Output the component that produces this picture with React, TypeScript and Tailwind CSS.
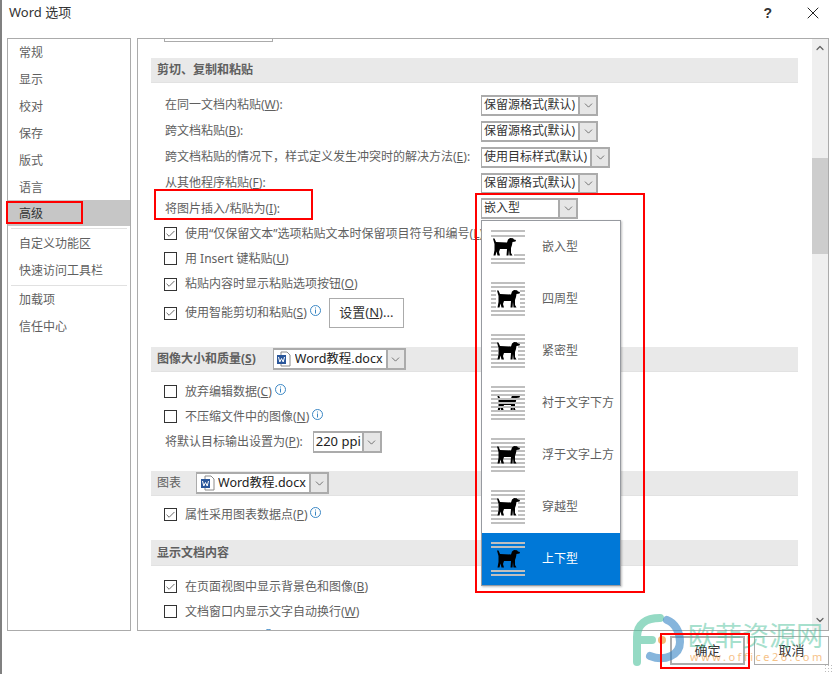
import type { ReactNode } from "react"
import { Check, ChevronDown, ChevronUp, X } from "lucide-react"

const sideTop = ["常规", "显示", "校对", "保存", "版式", "语言"]

type DogIconProps = {
  full: number[]
  side?: number[]
  sideW?: number
  short?: number[]
  dogX?: number
  under?: boolean
}

function DogIcon({ full, side = [], sideW = 5, short = [], dogX = 6, under = false }: DogIconProps) {
  const lines = (
    <>
      {full.map((y) => (
        <rect key={y} x="0" y={y} width="34" height="2" fill="#bfbfbf" />
      ))}
      {side.map((y) => (
        <g key={y}>
          <rect x="0" y={y} width={sideW} height="2" fill="#bfbfbf" />
          <rect x={34 - sideW} y={y} width={sideW} height="2" fill="#bfbfbf" />
        </g>
      ))}
      {short.map((y) => (
        <rect key={y} x="23" y={y} width="11" height="2" fill="#bfbfbf" />
      ))}
    </>
  )
  const dog = (
    <path
      transform={`translate(${dogX} 8)`}
      fill="#000"
      d="M0 0.500 L1.500 0.500 L3 4 L14 4.500 L15 1.500 L17 0 L20 0.300 L21 1.500 L23 2 L22.500 3.500 L19.500 4 L19 7 L18 10 L18 15 L19.500 17.500 L16.500 17.500 L16 12 L15.500 17.500 L13.500 17.500 L14 11 L7 11 L6 14 L7 17.500 L4.500 17.500 L3.500 13.500 L2.500 17.500 L0.500 17.500 L1.500 12 L1.500 6 Z"
    />
  )
  return (
    <svg width="34" height="34" viewBox="0 0 34 34" className="shrink-0">
      {under ? (
        <>
          {dog}
          {lines}
        </>
      ) : (
        <>
          {lines}
          {dog}
        </>
      )}
    </svg>
  )
}

const wrapItems = [
  { name: "嵌入型", icon: <DogIcon full={[0, 5, 28, 32]} short={[24]} dogX={2} /> },
  { name: "四周型", icon: <DogIcon full={[0, 4, 28, 32]} side={[8, 12, 16, 20, 24]} dogX={6} /> },
  { name: "紧密型", icon: <DogIcon full={[0, 4, 28, 32]} side={[8, 12, 16, 20, 24]} sideW={7} dogX={6} /> },
  { name: "衬于文字下方", icon: <DogIcon full={[0, 4, 8, 12, 16, 20, 24, 28, 32]} dogX={6} under /> },
  { name: "浮于文字上方", icon: <DogIcon full={[0, 4, 8, 12, 16, 20, 24, 28, 32]} dogX={6} /> },
  { name: "穿越型", icon: <DogIcon full={[0, 4, 28, 32]} side={[8, 12, 16, 20, 24]} sideW={7} dogX={6} /> },
  { name: "上下型", icon: <DogIcon full={[0, 4, 28, 32]} dogX={6} />, selected: true },
]

function ComboButton() {
  return (
    <span className="flex w-[18px] shrink-0 items-center justify-center border-l-2 border-[#ababab] bg-[#e6e6e6]">
      <ChevronDown size={13} strokeWidth={1.3} color="#444" />
    </span>
  )
}

function Combo({ text, width }: { text: string; width: string }) {
  return (
    <div className={`flex h-[21px] items-stretch border-y-2 border-r-2 border-l border-[#ababab] bg-white ${width}`}>
      <span className="flex-1 overflow-hidden whitespace-nowrap pl-[2px] text-[12px] leading-[16px] text-[#333]">{text}</span>
      <ComboButton />
    </div>
  )
}

function FileCombo({ text, width }: { text: string; width: string }) {
  return (
    <div className={`flex h-[22px] items-stretch border-y-2 border-r-2 border-l border-[#ababab] bg-white font-normal ${width}`}>
      <span className="flex w-[21px] shrink-0 items-center justify-center">
        <svg width="16" height="16" viewBox="0 0 16 16">
          <path d="M5 1 H11 L14 4 V15 H5 Z" fill="#fff" stroke="#8a8a8a" />
          <rect x="1" y="4" width="9" height="9" fill="#2b579a" />
          <path d="M2.500 6 L3.800 11 L5.500 7.500 L7.200 11 L8.500 6" fill="none" stroke="#fff" />
        </svg>
      </span>
      <span className="flex-1 overflow-hidden whitespace-nowrap text-[12.5px] leading-[17px] text-[#222]">{text}</span>
      <ComboButton />
    </div>
  )
}

function Info() {
  return (
    <svg width="11" height="11" viewBox="0 0 11 11" className="mb-[5px] ml-[3px] shrink-0">
      <circle cx="5.500" cy="5.500" r="5" fill="#fff" stroke="#3b87c4" />
      <rect x="5" y="2.500" width="1" height="1" fill="#3b87c4" />
      <rect x="5" y="4.500" width="1" height="4" fill="#3b87c4" />
    </svg>
  )
}

function CheckRow({ checked = false, children, h = "h-[25px]" }: { checked?: boolean; children: ReactNode; h?: string }) {
  return (
    <div className={`flex items-center pl-[13px] ${h}`}>
      <span className="mr-[8px] flex h-[13px] w-[13px] shrink-0 items-center justify-center border border-[#333] bg-white">
        {checked && <Check size={12} strokeWidth={1.6} color="#333" />}
      </span>
      <span className="flex items-center whitespace-pre">{children}</span>
    </div>
  )
}

function SelectRow({ label, combo, h = "h-[26px]" }: { label: ReactNode; combo: ReactNode; h?: string }) {
  return (
    <div className={`flex items-center pl-[14px] ${h}`}>
      <span className="w-[316px] shrink-0 whitespace-nowrap">{label}</span>
      {combo}
    </div>
  )
}

function Section({ children, className = "" }: { children: ReactNode; className?: string }) {
  return (
    <div className={`flex h-[25px] items-center border-b border-[#e2e2e2] bg-[#e9e9e9] pl-[6px] ${className}`}>
      {children}
    </div>
  )
}

export default function App() {
  return (
    <div className="relative h-[674px] w-[833px] overflow-hidden border-l-2 border-[#808080] bg-white font-['Noto_Sans','Noto_Sans_CJK_SC',sans-serif] text-[12px] text-[#5f5f5f]">
      <div className="flex h-[38px] items-center justify-between pb-[12px] pl-[7px] pr-[15px] text-[13px] text-[#333]">
        <span>Word 选项</span>
        <div className="flex items-center gap-[36px]">
          <span className="font-['Liberation_Sans',sans-serif] text-[14px] font-bold leading-none text-[#333]">?</span>
          <X size={20} strokeWidth={1.2} color="#222" className="-m-[5px]" />
        </div>
      </div>

      <div className="flex h-[593px] pl-[5px]">
        <nav className="w-[124px] shrink-0 border border-[#ababab]">
          {sideTop.map((item) => (
            <div key={item} className="flex h-[27px] items-center pl-[11px]">{item}</div>
          ))}
          <div className="-mt-px flex h-[26px] items-center bg-[#c6c6c6] pl-[11px] pt-[2px] text-[#333]">高级</div>
          <div className="mx-[3px] mb-px mt-[2px] h-px bg-[#e1e1e1]" />
          <div className="flex h-[27px] items-center pl-[11px]">自定义功能区</div>
          <div className="flex h-[27px] items-center pl-[11px]">快速访问工具栏</div>
          <div className="mx-[3px] mt-[1px] h-px bg-[#e1e1e1]" />
          <div className="flex h-[27px] items-center pl-[11px]">加载项</div>
          <div className="flex h-[27px] items-center pl-[11px]">信任中心</div>
        </nav>

        <div className="ml-[6px] flex w-[692px] border border-[#ababab]">
          <div className="min-w-0 flex-1 overflow-hidden pl-[13px] pr-[14px]">
            <div className="ml-[13px] h-[3px] w-[109px] border-x border-b border-[#ababab]" />

            <Section className="mt-[16px] font-bold">剪切、复制和粘贴</Section>
            <div className="mt-[9px]">
              <SelectRow label={<>在同一文档内粘贴(<u>W</u>):</>} combo={<Combo text="保留源格式(默认)" width="w-[117px]" />} />
              <SelectRow label={<>跨文档粘贴(<u>B</u>):</>} combo={<Combo text="保留源格式(默认)" width="w-[117px]" />} />
              <SelectRow label={<>跨文档粘贴的情况下，样式定义发生冲突时的解决方法(<u>E</u>):</>} combo={<Combo text="使用目标样式(默认)" width="w-[129px]" />} />
              <SelectRow label={<>从其他程序粘贴(<u>F</u>):</>} combo={<Combo text="保留源格式(默认)" width="w-[117px]" />} />
              <SelectRow h="h-[25px]" label={<span className="pt-px">将图片插入/粘贴为(<u>I</u>):</span>} combo={<Combo text="嵌入型" width="w-[97px]" />} />
              <CheckRow checked>使用“仅保留文本”选项粘贴文本时保留项目符号和编号(<u>L</u>)</CheckRow>
              <CheckRow>用 Insert 键粘贴(<u>U</u>)</CheckRow>
              <CheckRow checked h="h-[26px]">粘贴内容时显示粘贴选项按钮(<u>O</u>)</CheckRow>
              <CheckRow checked h="h-[32px]">
                使用智能剪切和粘贴(<u>S</u>)
                <Info />
                <span className="ml-[8px] flex h-[30px] w-[75px] items-center justify-center border border-[#ababab] text-[13px] text-[#333]">
                  设置(<u>N</u>)...
                </span>
              </CheckRow>
            </div>

            <Section className="mt-[18px]">
              <span className="mr-[17px] font-bold">图像大小和质量(<u>S</u>)</span>
              <FileCombo text="Word教程.docx" width="w-[133px]" />
            </Section>
            <div className="mt-[7px]">
              <CheckRow>放弃编辑数据(<u>C</u>)<Info /></CheckRow>
              <CheckRow>不压缩文件中的图像(<u>N</u>)<Info /></CheckRow>
              <div className="flex h-[26px] items-center gap-[10px] pl-[14px]">
                <span className="whitespace-nowrap">将默认目标输出设置为(<u>P</u>):</span>
                <div className="flex h-[22px] w-[69px] items-stretch border-y-2 border-r-2 border-l border-[#ababab]">
                  <span className="flex-1 whitespace-nowrap pl-[2px] text-[13px] leading-[17px] text-[#222]">220 ppi</span>
                  <ComboButton />
                </div>
              </div>
            </div>

            <Section className="mt-[16px]">
              <span className="mr-[15px]">图表</span>
              <FileCombo text="Word教程.docx" width="w-[133px]" />
            </Section>
            <div className="mt-[6px]">
              <CheckRow checked>属性采用图表数据点(<u>P</u>)<Info /></CheckRow>
            </div>

            <Section className="mt-[13px] h-[26px] font-bold">显示文档内容</Section>
            <div className="mt-[8px]">
              <CheckRow checked>在页面视图中显示背景色和图像(<u>B</u>)</CheckRow>
              <CheckRow>文档窗口内显示文字自动换行(<u>W</u>)</CheckRow>
              <CheckRow>显示图片框(<u>K</u>)<Info /></CheckRow>
            </div>
          </div>

          <div className="flex w-[16px] shrink-0 flex-col items-center bg-[#efefef]">
            <ChevronUp size={12} strokeWidth={2.4} color="#606060" className="mt-[3px]" />
            <div className="mt-[104px] h-[96px] w-full bg-[#cdcdcd]" />
            <ChevronDown size={12} strokeWidth={2.4} color="#606060" className="mt-[360px]" />
          </div>
        </div>
      </div>

      <div className="flex justify-end gap-[9px] pr-[4px] pt-[5px] text-[13px] text-[#333]">
        <button className="flex h-[29px] w-[75px] items-center justify-center border-2 border-[#ababab]">确定</button>
        <button className="flex h-[29px] w-[75px] items-center justify-center border border-[#ababab]">取消</button>
      </div>

      {/* open dropdown */}
      <ul className="absolute left-[479px] top-[220px] w-[140px] border border-[#979aa0] bg-white shadow-[1px_1px_2px_rgba(0,0,0,0.25)]">
        {wrapItems.map((item) => (
          <li key={item.name} className={`flex h-[52px] items-center pl-[9px] ${item.selected ? "bg-[#0078d7] text-white" : ""}`}>
            {item.icon}
            <span className="ml-[17px] whitespace-nowrap">{item.name}</span>
          </li>
        ))}
      </ul>

      {/* watermark */}
      <svg width="75" height="69" viewBox="0 0 75 69" fill="none" className="absolute left-[623px] top-[605px]">
        <path d="M12 57 V32 C12 19 21 13 35 13 M12 35 H27" stroke="#4fc29c" strokeWidth="8" strokeLinecap="round" opacity="0.6" />
        <path d="M42 15 C50 18 55 27 55 37 C55 50 40 57 25 51" stroke="#3584c4" strokeWidth="8" strokeLinecap="round" opacity="0.6" />
        <circle cx="37" cy="35" r="4" fill="#f19a38" opacity="0.7" />
      </svg>
      <div className="absolute left-[686px] top-[619px] text-[27px] leading-[34px] text-[#4fc29c] opacity-50">欧菲资源网</div>
      <div className="absolute left-[688px] top-[651px] text-[11px] leading-none tracking-[2.500px] text-[#f19a38] opacity-60">www.office26.com</div>
      <div className="absolute bottom-[2px] right-[1px] h-[8px] w-[8px] bg-[radial-gradient(#bbb_1px,transparent_1px)] bg-[length:3px_3px]" />

      {/* red annotation boxes */}
      <div className="absolute left-[4px] top-[201px] h-[23px] w-[77px] border-2 border-[#ff0000]" />
      <div className="absolute left-[152px] top-[189px] h-[31px] w-[159px] border-2 border-[#ff0000]" />
      <div className="absolute left-[473px] top-[193px] h-[400px] w-[170px] border-2 border-[#ff0000]" />
      <div className="absolute left-[658px] top-[633px] h-[36px] w-[90px] border-2 border-[#ff0000]" />
    </div>
  )
}
